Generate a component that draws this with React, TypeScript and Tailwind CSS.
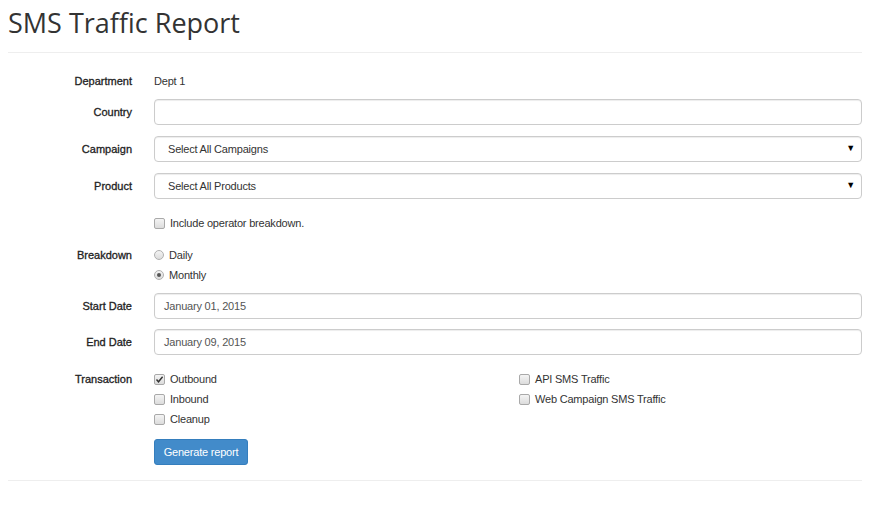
import React from "react";

const Box = ({ checked }: { checked?: boolean }) => (
  <span className="inline-flex w-[11px] h-[11px] rounded-[2px] border border-[#a9a9a9] bg-gradient-to-b from-[#f4f4f4] to-[#dcdcdc] items-center justify-center shrink-0">
    {checked && (
      <svg width="9" height="9" viewBox="0 0 9 9">
        <path d="M1.5 4.5 L3.5 6.8 L7.6 1.8" stroke="#333" strokeWidth="1.4" fill="none" />
      </svg>
    )}
  </span>
);

const Radio = ({ checked }: { checked?: boolean }) => (
  <span className="inline-flex w-[10px] h-[10px] rounded-full border border-[#b0b0b0] bg-gradient-to-b from-[#f4f4f4] to-[#dcdcdc] items-center justify-center shrink-0">
    {checked && <span className="w-[4px] h-[4px] rounded-full bg-[#555]" />}
  </span>
);

const Label = ({ children }: { children: React.ReactNode }) => (
  <div className="w-[124px] shrink-0 text-right text-[#222] tracking-normal [-webkit-text-stroke:0.3px_#222]">
    {children}
  </div>
);

const inputCls =
  "w-[708px] h-[26px] border border-[#ccc] rounded-[4px] shadow-[inset_0_1px_1px_rgba(0,0,0,0.075)] bg-white flex items-center text-[#555]";

export default function App() {
  return (
    <div
      className="bg-white w-[884px] h-[508px] text-[11px] tracking-[-0.2px] text-[#333]"
      style={{ fontFamily: '"Liberation Sans", Arial, sans-serif' }}
    >
      <div className="pl-2 w-[862px]">
        <h1
          className="text-[27px] tracking-normal leading-[36px] pt-[5px] text-[#333] font-normal"
          style={{ fontFamily: '"Open Sans", sans-serif' }}
        >
          SMS Traffic Report
        </h1>
        <div className="mt-[11px] h-px bg-[#eee]" />

        <div className="flex items-center h-5 mt-[18px]">
          <Label>Department</Label>
          <div className="ml-[22px]">Dept 1</div>
        </div>

        <div className="flex items-center mt-[8px]">
          <Label>Country</Label>
          <div className={"ml-[22px] " + inputCls} />
        </div>

        <div className="flex items-center mt-[11px]">
          <Label>Campaign</Label>
          <div className={"ml-[22px] justify-between pl-[13px] pr-[6px] " + inputCls}>
            <span className="text-[#333]">Select All Campaigns</span>
            <span className="text-[9px] text-black">▼</span>
          </div>
        </div>

        <div className="flex items-center mt-[11px]">
          <Label>Product</Label>
          <div className={"ml-[22px] justify-between pl-[13px] pr-[6px] " + inputCls}>
            <span className="text-[#333]">Select All Products</span>
            <span className="text-[9px] text-black">▼</span>
          </div>
        </div>

        <div className="flex items-center h-5 mt-[14px]">
          <div className="w-[124px] shrink-0" />
          <div className="ml-[22px] flex items-center gap-[5px]">
            <Box />
            <span>Include operator breakdown.</span>
          </div>
        </div>

        <div className="flex mt-[12px]">
          <Label>
            <div className="h-5 leading-5">Breakdown</div>
          </Label>
          <div className="ml-[22px] flex flex-col">
            <div className="flex items-center h-5 gap-[5px]">
              <Radio />
              <span>Daily</span>
            </div>
            <div className="flex items-center h-5 gap-[5px]">
              <Radio checked />
              <span>Monthly</span>
            </div>
          </div>
        </div>

        <div className="flex items-center mt-[8px]">
          <Label>Start Date</Label>
          <div className={"ml-[22px] pl-[9px] " + inputCls}>January 01, 2015</div>
        </div>

        <div className="flex items-center mt-[10px]">
          <Label>End Date</Label>
          <div className={"ml-[22px] pl-[9px] " + inputCls}>January 09, 2015</div>
        </div>

        <div className="flex mt-[14px]">
          <Label>
            <div className="h-5 leading-5">Transaction</div>
          </Label>
          <div className="ml-[22px] flex flex-col">
            <div className="flex">
              <div className="w-[365px] flex flex-col">
                <div className="flex items-center h-5 gap-[5px]">
                  <Box checked />
                  <span>Outbound</span>
                </div>
                <div className="flex items-center h-5 gap-[5px]">
                  <Box />
                  <span>Inbound</span>
                </div>
                <div className="flex items-center h-5 gap-[5px]">
                  <Box />
                  <span>Cleanup</span>
                </div>
              </div>
              <div className="flex flex-col">
                <div className="flex items-center h-5 gap-[5px]">
                  <Box />
                  <span>API SMS Traffic</span>
                </div>
                <div className="flex items-center h-5 gap-[5px]">
                  <Box />
                  <span>Web Campaign SMS Traffic</span>
                </div>
              </div>
            </div>
            <button className="mt-[10px] w-[94px] h-[26px] rounded-[3px] bg-[#428bca] border border-[#357ebd] text-white text-[11px] tracking-[-0.2px]">
              Generate report
            </button>
          </div>
        </div>

        <div className="mt-[15px] h-px bg-[#eee]" />
      </div>
    </div>
  );
}
